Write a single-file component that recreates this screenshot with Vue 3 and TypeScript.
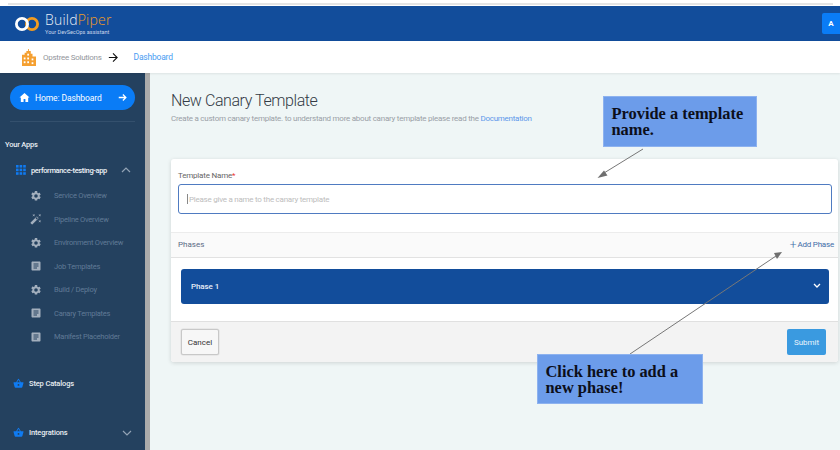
<script setup lang="ts">
interface NavItem { label: string; icon: 'gear' | 'wand' | 'doc' }
const items: NavItem[] = [
  { label: 'Service Overview', icon: 'gear' },
  { label: 'Pipeline Overview', icon: 'wand' },
  { label: 'Environment Overview', icon: 'gear' },
  { label: 'Job Templates', icon: 'doc' },
  { label: 'Build / Deploy', icon: 'gear' },
  { label: 'Canary Templates', icon: 'doc' },
  { label: 'Manifest Placeholder', icon: 'doc' },
]
const gearPath = 'M19.14 12.94c.04-.3.06-.61.06-.94s-.02-.64-.07-.94l2.03-1.58a.49.49 0 0 0 .12-.61l-1.92-3.32a.49.49 0 0 0-.59-.22l-2.39.96a7 7 0 0 0-1.62-.94l-.36-2.54A.48.48 0 0 0 13.92 2h-3.84a.48.48 0 0 0-.48.41l-.36 2.54c-.59.24-1.13.56-1.62.94l-2.39-.96a.49.49 0 0 0-.59.22L2.72 8.47a.48.48 0 0 0 .12.61l2.03 1.58c-.05.3-.07.62-.07.94s.02.64.07.94l-2.03 1.58a.49.49 0 0 0-.12.61l1.92 3.32c.12.22.37.29.59.22l2.39-.96c.5.38 1.03.7 1.62.94l.36 2.54c.05.24.24.41.48.41h3.84c.24 0 .44-.17.47-.41l.36-2.54c.59-.24 1.13-.56 1.62-.94l2.39.96c.22.08.47 0 .59-.22l1.92-3.32a.48.48 0 0 0-.12-.61l-2.01-1.58zM12 15.6A3.6 3.6 0 1 1 12 8.4a3.6 3.6 0 0 1 0 7.2z'
const docPath = 'M19 3H5c-1.1 0-2 .9-2 2v14c0 1.1.9 2 2 2h14c1.1 0 2-.9 2-2V5c0-1.1-.9-2-2-2zm-5 14H7v-2h7v2zm3-4H7v-2h10v2zm0-4H7V7h10v2z'
const wandPath = 'M7.5 5.6 10 7 8.6 4.5 10 2 7.5 3.4 5 2l1.4 2.5L5 7zm12 9.8L17 14l1.4 2.5L17 19l2.5-1.4L22 19l-1.4-2.5L22 14zM22 2l-2.5 1.4L17 2l1.4 2.5L17 7l2.5-1.4L22 7l-1.4-2.5zm-7.63 5.29a1 1 0 0 0-1.41 0L1.29 18.96a1 1 0 0 0 0 1.41l2.34 2.34a1 1 0 0 0 1.41 0L16.7 11.05a1 1 0 0 0 0-1.41l-2.33-2.35zm-1.03 5.49-2.12-2.12 2.44-2.44 2.12 2.12-2.44 2.44z'
const paths: Record<NavItem['icon'], string> = { gear: gearPath, doc: docPath, wand: wandPath }
const basket = 'M17.21 9l-4.38-6.56a1 1 0 0 0-1.66 0L6.79 9H2c-.55 0-1 .45-1 1l.04.27 2.54 9.27c.23.84 1 1.46 1.92 1.46h13c.92 0 1.69-.62 1.93-1.46l2.54-9.27L23 10c0-.55-.45-1-1-1h-4.79zM9 9l3-4.4L15 9H9zm3 8a2 2 0 1 1 0-4 2 2 0 0 1 0 4z'
</script>

<template>
  <div class="page">
    <div class="topstrip"><span class="topgrey"></span></div>
    <header class="header">
      <div class="logo">
        <svg class="logomark" width="24" height="16" viewBox="0 0 24 16" fill="none">
          <circle cx="17" cy="8" r="5.6" stroke="#f39c1f" stroke-width="2.8" />
          <circle cx="7" cy="8" r="5.6" stroke="#fff" stroke-width="2.8" />
        </svg>
        <div class="logotext">
          <div class="logoname">Build<span class="piper">Piper</span></div>
          <div class="logotag">Your DevSecOps assistant</div>
        </div>
      </div>
      <div class="avatar">A</div>
    </header>
    <nav class="crumbs">
      <svg class="building" width="14" height="17" viewBox="0 0 16 18" preserveAspectRatio="none">
        <path fill="#f5a031" d="M0 6h3V4h2V2h2V0h1v2h2v3h2v3h4v10H0z" />
        <g fill="#fff">
          <rect x="2" y="9" width="2" height="2" /><rect x="6" y="9" width="2" height="2" /><rect x="11" y="10" width="2" height="2" />
          <rect x="2" y="13" width="2" height="2" /><rect x="6" y="13" width="2" height="2" /><rect x="11" y="14" width="2" height="2" />
          <rect x="6" y="5" width="2" height="2" />
        </g>
      </svg>
      <span class="org">Opstree Solutions</span>
      <svg class="crumbarrow" width="10" height="11" viewBox="0 0 12 12" fill="none" stroke="#111" stroke-width="1.3">
        <path d="M1 6h10M6 1l5 5-5 5" />
      </svg>
      <a class="crumblink">Dashboard</a>
    </nav>
    <div class="body">
      <aside class="sidebar">
        <div class="side-inner">
          <button class="homebtn">
            <svg width="11" height="11" viewBox="0 0 24 24" fill="#fff"><path d="M10 22v-7h4v7h6v-10h3L12 2 1 12h3v10z" /></svg>
            <span class="homelabel">Home: Dashboard</span>
            <svg class="homearrow" width="9" height="9" viewBox="0 0 12 12" fill="none" stroke="#fff" stroke-width="1.7"><path d="M1 6h9.5M6.5 2l4 4-4 4" /></svg>
          </button>
          <div class="divider"></div>
          <div class="yourapps">Your Apps</div>
          <div class="approw">
            <svg width="10" height="10" viewBox="0 0 10 10" fill="#0f7bf2">
              <rect width="2.6" height="2.6" /><rect x="3.6" width="2.6" height="2.6" /><rect x="7.2" width="2.6" height="2.6" />
              <rect y="3.6" width="2.6" height="2.6" /><rect x="3.6" y="3.6" width="2.6" height="2.6" /><rect x="7.2" y="3.6" width="2.6" height="2.6" />
              <rect y="7.2" width="2.6" height="2.6" /><rect x="3.6" y="7.2" width="2.6" height="2.6" /><rect x="7.2" y="7.2" width="2.6" height="2.6" />
            </svg>
            <span class="appname">performance-testing-app</span>
            <svg class="chev" width="10" height="6" viewBox="0 0 10 6" fill="none" stroke="#93a3b5" stroke-width="1.2"><path d="M1 5l4-4 4 4" /></svg>
          </div>
          <ul class="sublist">
            <li v-for="item in items" :key="item.label" class="subitem">
              <svg width="12" height="12" viewBox="0 0 24 24" fill="#a3afbd"><path :d="paths[item.icon]" /></svg>
              <span>{{ item.label }}</span>
            </li>
          </ul>
          <div class="catrow catalogs">
            <svg width="11" height="11" viewBox="0 0 24 24" fill="#0f7bf2"><path :d="basket" /></svg>
            <span>Step Catalogs</span>
          </div>
          <div class="catrow integrations">
            <svg width="11" height="11" viewBox="0 0 24 24" fill="#0f7bf2"><path :d="basket" /></svg>
            <span>Integrations</span>
            <svg class="chev2" width="10" height="6" viewBox="0 0 10 6" fill="none" stroke="#93a3b5" stroke-width="1.2"><path d="M1 1l4 4 4-4" /></svg>
          </div>
        </div>
        <div class="scrollbar"></div>
      </aside>
      <main class="main">
        <h1 class="title">New Canary Template</h1>
        <p class="sub">Create a custom canary template. to understand more about canary template please read the <a class="doc">Documentation</a></p>
        <section class="card">
          <div class="field">
            <label class="flabel">Template Name<span class="req">*</span></label>
            <div class="input"><span class="caret"></span>Please give a name to the canary template</div>
          </div>
          <div class="phasebar">
            <span class="phases">Phases</span>
            <span class="addphase"><span class="plus">+</span>Add Phase</span>
          </div>
          <div class="phasewrap">
            <div class="phase">
              <span>Phase 1</span>
              <svg width="8" height="6" viewBox="0 0 8 6" fill="none" stroke="#fff" stroke-width="1.3"><path d="M1 1l3 3 3-3" /></svg>
            </div>
          </div>
          <div class="foot">
            <button class="cancel">Cancel</button>
            <button class="submit">Submit</button>
          </div>
        </section>
      </main>
    </div>
    <svg class="arrows" width="840" height="450" viewBox="0 0 840 450">
      <g fill="#6f6f6f" stroke="none">
        <path d="M643 149L604 173" stroke="#777" stroke-width="1" fill="none" />
        <path d="M597.5 178L604 170.5L607.5 175.5z" />
        <path d="M630 354L776 256" stroke="#777" stroke-width="1" fill="none" />
        <path d="M782 252L774 253L777 259z" />
      </g>
    </svg>
    <div class="callout c1">Provide a template name.</div>
    <div class="callout c2">Click here to add a new phase!</div>
  </div>
</template>

<style>
html, body { margin: 0; padding: 0; overflow: hidden; }
</style>

<style scoped>
.page { position: relative; width: 840px; height: 450px; overflow: hidden; font-family: Roboto, "Liberation Sans", sans-serif; background: #eff6f6; display: flex; flex-direction: column; }
.topstrip { height: 6px; background: #fff; flex: none; padding-top: 3px; box-sizing: border-box; }
.topgrey { display: block; height: 2px; margin-left: 8px; margin-right: 7px; background: #e4e4e4; }
.header { height: 35px; flex: none; background: #124d9b; display: flex; align-items: center; justify-content: space-between; box-sizing: border-box; }
.logo { display: flex; align-items: center; gap: 6px; padding-left: 15px; }
.logotext { display: flex; flex-direction: column; }
.logoname { font-family: "Open Sans", sans-serif; font-size: 14px; line-height: 16px; color: #e9eef6; font-weight: 300; letter-spacing: .2px; }
.piper { color: #f39c1f; }
.logotag { font-size: 5.5px; line-height: 7px; color: #c8d6ea; font-weight: 400; margin-top: 1px; }
.avatar { width: 18px; height: 21px; background: #0a7cf6; color: #fff; font-size: 8px; font-weight: 700; border-radius: 2px 0 0 2px; display: flex; align-items: center; justify-content: center; }
.crumbs { height: 32px; flex: none; background: #fff; display: flex; align-items: center; padding-left: 22px; box-sizing: border-box; position: relative; z-index: 1; box-shadow: 0 1px 2px rgba(0,0,0,.08); }
.org { font-size: 8px; letter-spacing: -.27px; color: #93969c; margin-left: 7px; }
.crumbarrow { margin-left: 6px; }
.crumblink { font-size: 8.5px; letter-spacing: -.22px; color: #4a9cf2; margin-left: 16px; }
.body { flex: 1; display: flex; min-height: 0; }
.sidebar { width: 150px; flex: none; display: flex; background: #24415f; box-sizing: border-box; }
.side-inner { width: 145px; box-sizing: border-box; padding-top: 12px; }
.scrollbar { width: 5px; background: #ababab; }
.homebtn { width: 125px; height: 25px; margin-left: 10px; background: #0a7cf6; border: 0; border-radius: 13px; color: #fff; display: flex; align-items: center; padding: 0 8px 0 9px; box-sizing: border-box; font-family: inherit; font-size: 8.5px; font-weight: 400; }
.homelabel { flex: 1; text-align: left; margin-left: 5px; letter-spacing: -.1px; }
.divider { height: 1px; background: #34506d; margin: 11px 10px 0; }
.yourapps { font-size: 7.5px; font-weight: 500; letter-spacing: -.2px; color: #e8edf2; margin: 18px 0 0 5px; line-height: 9px; }
.approw { display: flex; align-items: center; margin: 14px 0 0 16px; height: 14px; }
.appname { font-size: 7.5px; font-weight: 500; letter-spacing: -.35px; color: #eef2f6; margin-left: 5px; }
.chev { margin-left: auto; margin-right: 14px; }
.sublist { list-style: none; margin: 7px 0 0; padding: 0 0 0 30px; }
.subitem { height: 23.5px; display: flex; align-items: center; gap: 12px; font-size: 7.5px; letter-spacing: -.25px; color: #607a96; }
.catrow { display: flex; align-items: center; font-size: 7.5px; letter-spacing: -.15px; font-weight: 500; color: #e8edf2; gap: 5px; padding-left: 13px; height: 14px; }
.catalogs { margin-top: 28px; }
.integrations { margin-top: 35px; }
.chev2 { margin-left: auto; margin-right: 13px; }
.main { flex: 1; min-width: 0; padding: 18px 2px 0 21px; box-sizing: border-box; }
.title { margin: 0; font-size: 16px; font-weight: 300; color: #333b45; line-height: 20px; letter-spacing: -.42px; }
.sub { margin: 2px 0 0; font-size: 8px; letter-spacing: -.25px; color: #9aa0a6; line-height: 12px; }
.doc { color: #5d97ea; }
.card { margin-top: 34px; background: #fff; border-radius: 3px; box-shadow: 0 1px 4px rgba(0,0,0,.14); }
.field { padding: 12px 6px 0 7px; height: 73px; box-sizing: border-box; }
.flabel { display: block; font-size: 8px; letter-spacing: -.2px; color: #666; line-height: 10px; }
.req { color: #e33; }
.input { margin-top: 3px; height: 30px; border: 1px solid #4f7bc1; border-radius: 3px; font-size: 8px; letter-spacing: -.25px; color: #bdbdbd; display: flex; align-items: center; padding-left: 8px; box-sizing: border-box; }
.caret { width: 1px; height: 10px; background: #888; margin-right: 1px; }
.phasebar { height: 26px; background: #fafafa; border-top: 1px solid #ececec; border-bottom: 1px solid #e2e2e2; display: flex; align-items: center; justify-content: space-between; padding: 0 4px 1px 7px; box-sizing: border-box; font-size: 8px; }
.phases { color: #5a6a85; }
.addphase { color: #3f6da8; display: flex; align-items: center; letter-spacing: -.2px; }
.plus { font-size: 12px; line-height: 8px; margin-right: 1px; font-weight: 300; }
.phasewrap { padding: 11px 9px 17.5px 10px; }
.phase { height: 34.5px; background: #124d9b; border-radius: 3px; color: #e8eef7; font-size: 8px; letter-spacing: -.1px; font-weight: 500; display: flex; align-items: center; justify-content: space-between; padding: 0 8px 0 10px; box-sizing: border-box; }
.foot { height: 41px; background: #f3f3f3; border-top: 1px solid #e0e0e0; display: flex; align-items: center; justify-content: space-between; padding: 0 12px 0 10px; box-sizing: border-box; border-radius: 0 0 3px 3px; }
.cancel { width: 38px; height: 26px; background: #f7f7f7; border: 1px solid #c8c8c8; box-shadow: 0 0 0 .5px #ddd; border-radius: 2px; font-family: inherit; font-size: 8px; font-weight: 400; color: #333; padding: 0; }
.submit { width: 39px; height: 26px; background: #3a9ae0; border: 0; border-radius: 2px; font-family: inherit; font-size: 8px; font-weight: 400; color: #eaf4fc; padding: 0; }
.arrows { position: absolute; left: 0; top: 0; pointer-events: none; }
.callout { position: absolute; background: #6c9cea; border: 1px solid #8db2ef; color: #0c0f1a; font-family: "Liberation Serif", serif; font-weight: 700; font-size: 16.4px; line-height: 16px; box-sizing: border-box; padding: 9px 7.5px; }
.c1 { left: 603px; top: 96px; width: 154px; height: 51px; }
.c2 { left: 537px; top: 354px; width: 166px; height: 50px; }
</style>
